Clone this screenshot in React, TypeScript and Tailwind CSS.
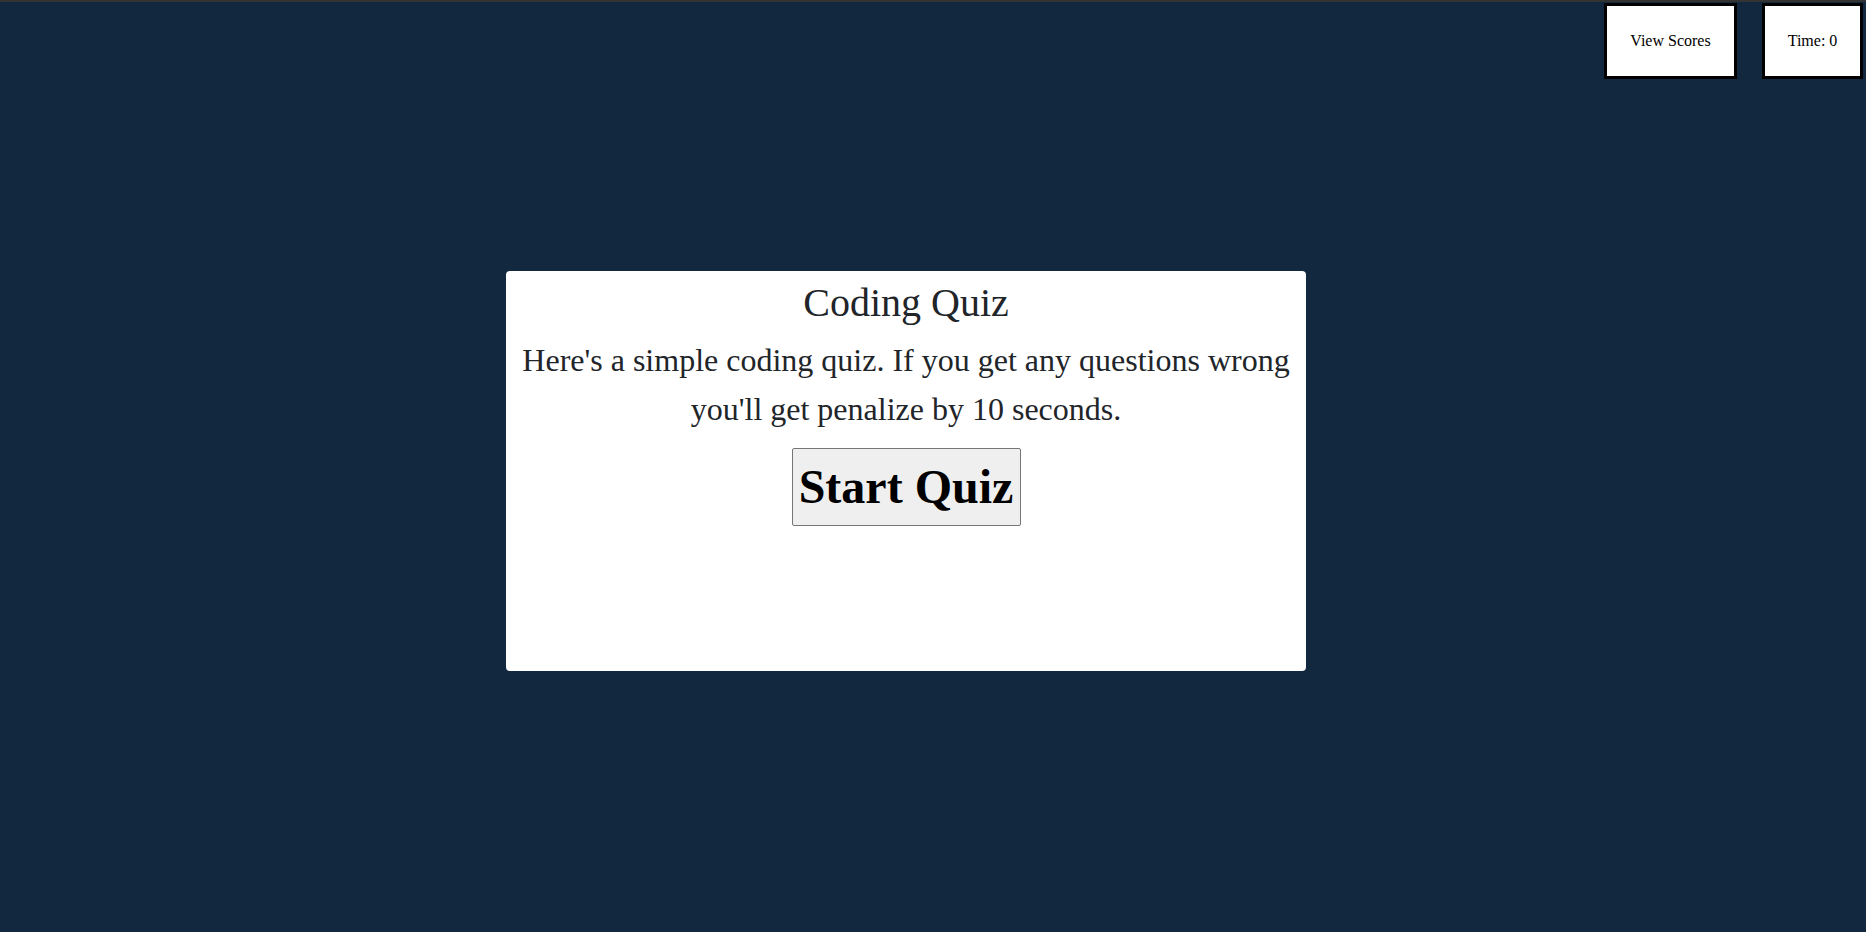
import React from "react";

const App = () => {
  const [time] = React.useState<number>(0);

  return (
    <div className="min-h-screen w-full bg-[#12283f] border-t-2 border-[#333] font-['Liberation_Serif',serif]">
      <div className="flex justify-end gap-[25px] pr-[3px] pt-[1px]">
        <button className="w-[133px] h-[76px] bg-white border-[3px] border-black text-[16px] text-black">
          View Scores
        </button>
        <div className="w-[101px] h-[76px] bg-white border-[3px] border-black text-[16px] text-black flex items-center justify-center">
          Time: {time}
        </div>
      </div>

      <div className="ml-[506px] mt-[192px] w-[800px] h-[400px] bg-white rounded-[4px] flex flex-col items-center text-center text-[#212529]">
        <h1 className="mt-[6px] text-[40px] leading-[52px]">Coding Quiz</h1>
        <p className="mt-[7px] px-2 text-[32px] leading-[49px]">
          Here's a simple coding quiz. If you get any questions wrong
          <br />
          you'll get penalize by 10 seconds.
        </p>
        <button className="mt-[14px] w-[229px] h-[78px] bg-[#efefef] border border-[#767676] rounded-[2px] text-[48px] font-bold text-black">
          Start Quiz
        </button>
      </div>
    </div>
  );
};

export default App;
